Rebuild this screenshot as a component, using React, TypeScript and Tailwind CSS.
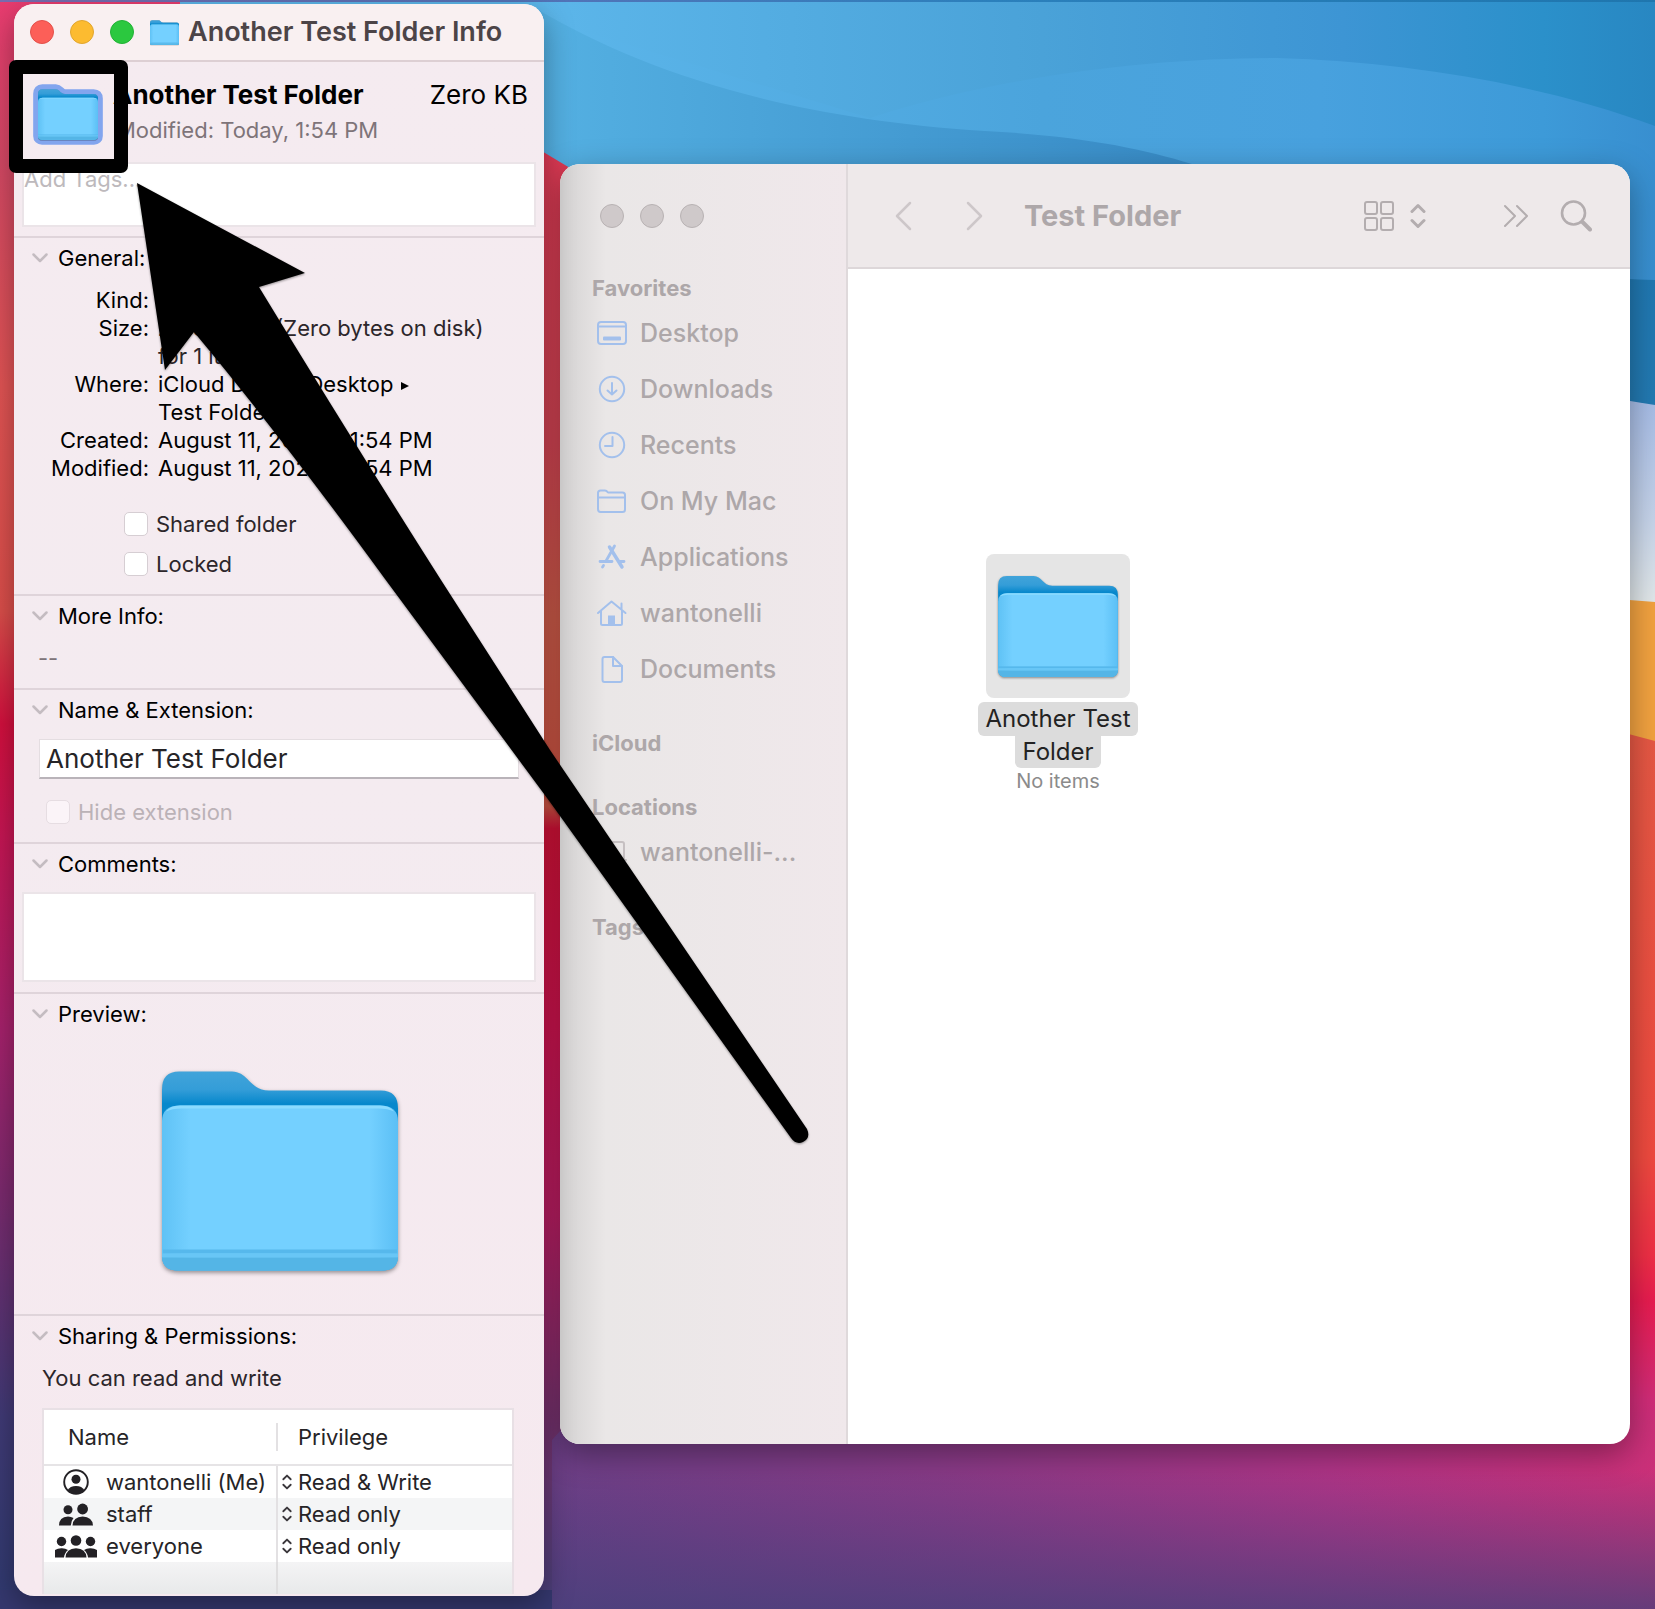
import { useId, type ReactNode } from "react";

function Wallpaper() {
  return (
    <svg
      aria-hidden="true"
      className="absolute inset-0 h-full w-full"
      viewBox="0 0 1655 1609"
      preserveAspectRatio="none"
    >
      <defs>
        <linearGradient id="wp-left" x1="0" y1="0" x2="0" y2="1609" gradientUnits="userSpaceOnUse">
          <stop offset="0" stopColor="#e93c70" />
          <stop offset="0.1" stopColor="#d34864" />
          <stop offset="0.24" stopColor="#e15454" />
          <stop offset="0.38" stopColor="#da4e4a" />
          <stop offset="0.45" stopColor="#d3103e" />
          <stop offset="0.52" stopColor="#c61654" />
          <stop offset="0.64" stopColor="#a6226c" />
          <stop offset="0.74" stopColor="#7c2a6e" />
          <stop offset="0.88" stopColor="#403a76" />
          <stop offset="1" stopColor="#303a70" />
        </linearGradient>
        <linearGradient id="wp-mid" x1="0" y1="150" x2="0" y2="1609" gradientUnits="userSpaceOnUse">
          <stop offset="0" stopColor="#e03a55" />
          <stop offset="0.2" stopColor="#d54554" />
          <stop offset="0.32" stopColor="#d05c4a" />
          <stop offset="0.45" stopColor="#d05444" />
          <stop offset="0.465" stopColor="#d41238" />
          <stop offset="0.6" stopColor="#d01450" />
          <stop offset="0.73" stopColor="#bc1e64" />
          <stop offset="0.86" stopColor="#7c3270" />
          <stop offset="1" stopColor="#48407a" />
        </linearGradient>
        <linearGradient id="wp-bottom" x1="560" y1="1590" x2="1655" y2="1400" gradientUnits="userSpaceOnUse">
          <stop offset="0" stopColor="#6b3f86" />
          <stop offset="0.35" stopColor="#873a86" />
          <stop offset="0.7" stopColor="#ae3486" />
          <stop offset="1" stopColor="#cc3078" />
        </linearGradient>
        <linearGradient id="wp-base" x1="0" y1="1470" x2="0" y2="1609" gradientUnits="userSpaceOnUse">
          <stop offset="0" stopColor="#44407a" stopOpacity="0" />
          <stop offset="1" stopColor="#44407a" stopOpacity="0.75" />
        </linearGradient>
        <linearGradient id="wp-right" x1="0" y1="735" x2="0" y2="1500" gradientUnits="userSpaceOnUse">
          <stop offset="0" stopColor="#e65844" />
          <stop offset="0.55" stopColor="#ef4a3f" />
          <stop offset="0.68" stopColor="#ef2f45" />
          <stop offset="0.74" stopColor="#e81c50" />
          <stop offset="0.87" stopColor="#d02c78" />
          <stop offset="1" stopColor="#bd3380" />
        </linearGradient>
        <linearGradient id="wp-sky" x1="540" y1="0" x2="1655" y2="0" gradientUnits="userSpaceOnUse">
          <stop offset="0" stopColor="#5cb6ea" />
          <stop offset="0.45" stopColor="#4aa2d8" />
          <stop offset="0.72" stopColor="#3d95d4" />
          <stop offset="0.9" stopColor="#2b90ca" />
          <stop offset="1" stopColor="#2887c2" />
        </linearGradient>
        <linearGradient id="wp-wave" x1="540" y1="0" x2="1655" y2="0" gradientUnits="userSpaceOnUse">
          <stop offset="0" stopColor="#5cb6ea" />
          <stop offset="0.45" stopColor="#4ba4dc" />
          <stop offset="0.7" stopColor="#48a1de" />
          <stop offset="0.9" stopColor="#3d9ad8" />
          <stop offset="1" stopColor="#388fd0" />
        </linearGradient>
        <linearGradient id="wp-low" x1="540" y1="0" x2="1190" y2="0" gradientUnits="userSpaceOnUse">
          <stop offset="0" stopColor="#54b0e2" />
          <stop offset="1" stopColor="#388bc6" />
        </linearGradient>
        <linearGradient id="wp-deep" x1="0" y1="265" x2="0" y2="408" gradientUnits="userSpaceOnUse">
          <stop offset="0" stopColor="#2078b2" />
          <stop offset="1" stopColor="#237ab2" />
        </linearGradient>
        <linearGradient id="wp-pale" x1="0" y1="400" x2="0" y2="602" gradientUnits="userSpaceOnUse">
          <stop offset="0" stopColor="#a6bce6" />
          <stop offset="0.6" stopColor="#c6d4ea" />
          <stop offset="1" stopColor="#e2e8ea" />
        </linearGradient>
        <linearGradient id="wp-edge" x1="0" y1="0" x2="1655" y2="0" gradientUnits="userSpaceOnUse">
          <stop offset="0" stopColor="#7a6cb0" />
          <stop offset="0.35" stopColor="#5074b8" />
          <stop offset="0.6" stopColor="#2b80bc" />
          <stop offset="1" stopColor="#1f76ae" />
        </linearGradient>
      </defs>
      <rect width="300" height="1609" fill="url(#wp-left)" />
      <rect x="180" width="1475" height="420" fill="url(#wp-sky)" />
      <path d="M535 16L870 118C1000 76 1150 58 1277 58C1410 62 1545 85 1655 126V420H535Z" fill="url(#wp-wave)" />
      <path d="M535 8C640 70 780 118 985 131C1080 136 1140 148 1192 164V200H535Z" fill="url(#wp-low)" />
      <path d="M1500 250C1560 270 1600 279 1655 280V420H1500Z" fill="url(#wp-deep)" />
      <path d="M300 150H540L570 168L900 300V1609H300Z" fill="url(#wp-mid)" />
      <path d="M1500 388C1560 390 1600 396 1655 405V620H1500Z" fill="url(#wp-pale)" />
      <path d="M1500 590L1655 602V800H1500Z" fill="#f2a240" />
      <path d="M1500 700L1655 741V1560H1500Z" fill="url(#wp-right)" />
      <path d="M570 1420H1655V1609H552V1440Z" fill="url(#wp-bottom)" />
      <path d="M552 1470H1655V1609H552Z" fill="url(#wp-base)" />
      <rect y="1590" width="552" height="19" fill="#35386f" />
      <rect width="1655" height="2" fill="url(#wp-edge)" />
    </svg>
  );
}

const FOLDER_BACK =
  "M0 18Q0 0 17 0H70C86 0 88 19 107 19H219Q236 19 236 37V184Q236 199 220 199H16Q0 199 0 184Z";

function FolderArt({ className, outlined = false }: { className: string; outlined?: boolean }) {
  const id = useId();
  return (
    <svg aria-hidden="true" viewBox="0 0 236 199" className={"overflow-visible " + className}>
      <defs>
        <linearGradient id={id + "b"} x1="0" y1="0" x2="0" y2="40" gradientUnits="userSpaceOnUse">
          <stop offset="0" stopColor="#41a4da" />
          <stop offset="0.45" stopColor="#349dd8" />
          <stop offset="0.8" stopColor="#0788cc" />
        </linearGradient>
        <linearGradient id={id + "f"} x1="0" y1="0" x2="1" y2="0">
          <stop offset="0" stopColor="#5fc2f5" />
          <stop offset="0.12" stopColor="#74d0ff" />
          <stop offset="0.88" stopColor="#74d0ff" />
          <stop offset="1" stopColor="#5bbff5" />
        </linearGradient>
      </defs>
      {outlined && (
        <path d={FOLDER_BACK} fill="none" stroke="#82a5ee" strokeWidth="38" strokeLinejoin="round" />
      )}
      <g className="drop-shadow-[0_2px_2px_rgba(0,0,0,0.4)]">
        <path d={FOLDER_BACK} fill={`url(#${id}b)`} />
        <path d="M0 50Q0 34 18 34H218Q236 34 236 50V184Q236 199 220 199H16Q0 199 0 184Z" fill={`url(#${id}f)`} />
      </g>
      <path d="M4 40Q8 34 18 34H218Q228 34 232 40Q226 37 216 37H20Q10 37 4 40Z" fill="#8adbff" />
      <rect x="1" y="178" width="234" height="4" fill="#56b8ec" />
      <rect x="0" y="182" width="236" height="4" fill="#68c6f6" />
      <path d="M0 186H236Q235 199 220 199H16Q1 199 0 186Z" fill="#54b5e6" />
    </svg>
  );
}

function UpDown({ className }: { className: string }) {
  return (
    <svg
      aria-hidden="true"
      viewBox="0 0 16 26"
      className={className}
      fill="none"
      stroke="currentColor"
      strokeWidth="3"
      strokeLinecap="round"
      strokeLinejoin="round"
    >
      <path d="M2 8.500L8 2.500L14 8.500M2 17.500L8 23.500L14 17.500" />
    </svg>
  );
}

function Section({ title, children }: { title: string; children: ReactNode }) {
  return (
    <section className="border-t-2 border-[#dfd4da]">
      <button type="button" className="flex h-10 w-full items-center pl-[18px] text-left">
        <svg
          aria-hidden="true"
          viewBox="0 0 16 10"
          className="h-[10px] w-4"
          fill="none"
          stroke="#c4bcc1"
          strokeWidth="2.500"
          strokeLinecap="round"
          strokeLinejoin="round"
        >
          <path d="M1.500 1.500L8 8L14.500 1.500" />
        </svg>
        <span className="ml-[10px] text-[22px] leading-7 text-black">{title}</span>
      </button>
      {children}
    </section>
  );
}

function Check({ label, disabled = false, className }: { label: string; disabled?: boolean; className: string }) {
  return (
    <label className={"flex h-10 items-center gap-2 text-[22px] leading-7 " + className}>
      <input
        type="checkbox"
        disabled={disabled}
        className="h-6 w-6 appearance-none rounded-[5px] border border-[#d6ced3] bg-white disabled:border-[#e6dde2] disabled:bg-[#fbf4f8]"
      />
      {label}
    </label>
  );
}

function PathArrow() {
  return (
    <svg aria-hidden="true" viewBox="0 0 8 8" className="ml-2 inline-block h-2 w-2 align-middle">
      <path d="M0 0L8 4L0 8Z" fill="#000" />
    </svg>
  );
}

const details: { term: string; value: ReactNode; second?: string; tone: string }[] = [
  { term: "Kind:", value: "Folder", tone: "text-black" },
  { term: "Size:", value: "Zero bytes (Zero bytes on disk)", second: "for 1 item", tone: "text-[#2c262a]" },
  {
    term: "Where:",
    value: (
      <>
        iCloud Drive
        <PathArrow /> Desktop
        <PathArrow />
      </>
    ),
    second: "Test Folder",
    tone: "text-black",
  },
  { term: "Created:", value: "August 11, 2021 at 1:54 PM", tone: "text-black" },
  { term: "Modified:", value: "August 11, 2021 at 1:54 PM", tone: "text-black" },
];

function PersonCircle() {
  return (
    <svg aria-hidden="true" viewBox="0 0 26 26" className="h-[26px] w-[26px]" fill="#232125">
      <circle cx="13" cy="13" r="11.800" fill="none" stroke="#232125" strokeWidth="1.900" />
      <circle cx="13" cy="10.300" r="4.500" />
      <path d="M4.500 21.300Q7 17 13 17T21.500 21.300Q18 25 13 25T4.500 21.300Z" />
    </svg>
  );
}

function TwoPeople() {
  return (
    <svg aria-hidden="true" viewBox="0 0 34 23" className="h-[23px] w-[34px]" fill="#232125">
      <circle cx="9" cy="6.800" r="4.500" />
      <path d="M0 22.500Q0 14 9 13.500Q12 13.500 14.500 15Q12 18 11.800 22.500Z" />
      <circle cx="23.600" cy="6" r="5.400" />
      <path d="M13.500 22.500Q14 13.800 23.600 13.500Q33.500 13.800 34 22.500Z" />
    </svg>
  );
}

function ThreePeople() {
  return (
    <svg aria-hidden="true" viewBox="0 0 42 23" className="h-[23px] w-[42px]" fill="#232125">
      <circle cx="6.500" cy="6.500" r="4.700" />
      <circle cx="35.500" cy="6.500" r="4.700" />
      <path d="M0 22.500V15Q3 13 7 13.200Q10.500 13.200 13 15Q9.500 18 9 22.500Z" />
      <path d="M42 22.500V15Q39 13 35 13.200Q31.500 13.200 29 15Q32.500 18 33 22.500Z" />
      <circle cx="21" cy="5.500" r="5.300" />
      <path d="M10.500 22.500Q11 13.500 21 13.200Q31 13.500 31.500 22.500Z" />
    </svg>
  );
}

const people: { name: string; privilege: string; icon: ReactNode; row: string }[] = [
  { name: "wantonelli (Me)", privilege: "Read & Write", icon: <PersonCircle />, row: "bg-white" },
  { name: "staff", privilege: "Read only", icon: <TwoPeople />, row: "bg-[#f4f5f6]" },
  { name: "everyone", privilege: "Read only", icon: <ThreePeople />, row: "bg-white" },
];

function InfoWindow() {
  return (
    <main className="relative z-10 w-[530px] shrink-0 overflow-hidden rounded-[20px] bg-linear-to-b from-[#f5ebf0] via-[#f4ebf0] to-[#f6e9ef] shadow-[0_10px_30px_rgba(0,0,0,0.35)]">
      <header className="flex h-[56px] items-center bg-[#f9f0f1] pl-4">
        <button type="button" aria-label="Close" className="h-6 w-6 rounded-full border border-[#e2504a] bg-[#fc5f58]" />
        <button type="button" aria-label="Minimize" className="ml-4 h-6 w-6 rounded-full border border-[#e0a52e] bg-[#fcbb30]" />
        <button type="button" aria-label="Zoom" className="ml-4 h-6 w-6 rounded-full border border-[#22b136] bg-[#2bc83f]" />
        <FolderArt className="ml-4 h-[25px] w-[29px]" />
        <h1 className="ml-[9px] text-[27px] leading-8 font-semibold whitespace-nowrap text-[#4c4447]">
          Another Test Folder Info
        </h1>
      </header>

      <section className="border-t-2 border-[#ddcfd3] px-2 pb-[9px]">
        <div className="flex">
          <button type="button" aria-label="Folder icon" className="mt-[27px] ml-4 h-[51px] w-[60px]">
            <FolderArt className="h-[51px] w-[60px]" outlined />
          </button>
          <div className="mt-[17px] ml-[15px] flex-1">
            <div className="flex justify-between pr-2 text-[26px] leading-8 text-black">
              <h2 className="font-bold">Another Test Folder</h2>
              <span>Zero KB</span>
            </div>
            <p className="mt-[5px] ml-[3px] text-[22px] leading-7 text-[#7e7479]">Modified: Today, 1:54 PM</p>
          </div>
        </div>
        <textarea
          aria-label="Tags"
          placeholder="Add Tags..."
          className="mt-[18px] block h-[65px] w-full resize-none border-2 border-[#ebe4e8] bg-white pt-px text-[22px] leading-7 placeholder:text-[#bdb9bc]"
        />
      </section>

      <Section title="General:">
        <dl className="pt-2 text-[22px] leading-7">
          {details.map((d) => (
            <div key={d.term} className="flex">
              <dt className="w-[135px] text-right text-black">{d.term}</dt>
              <dd className={"ml-[9px] whitespace-nowrap " + d.tone}>
                {d.value}
                {d.second && <span className="block">{d.second}</span>}
              </dd>
            </div>
          ))}
        </dl>
        <div className="mt-[22px] pb-[10px] text-[#2c262a]">
          <Check label="Shared folder" className="ml-[110px]" />
          <Check label="Locked" className="ml-[110px]" />
        </div>
      </Section>

      <Section title="More Info:">
        <p className="mt-2 pb-4 pl-6 text-[22px] leading-7 text-[#7e7479]">--</p>
      </Section>

      <Section title="Name & Extension:">
        <div className="pb-[10px]">
          <input
            type="text"
            aria-label="Name and extension"
            defaultValue="Another Test Folder"
            className="mt-[9px] ml-[25px] block h-10 w-[480px] border border-b-2 border-[#e4dde1] border-b-[#b9b3b9] bg-white pl-[6px] text-[26px] leading-8 text-[#262427]"
          />
          <Check label="Hide extension" disabled className="mt-[13px] ml-8 text-[#bbb2b7]" />
        </div>
      </Section>

      <Section title="Comments:">
        <div className="px-2 pb-[10px]">
          <textarea
            aria-label="Comments"
            className="mt-2 block h-[90px] w-full resize-none border-2 border-[#ebe4e8] bg-white"
          />
        </div>
      </Section>

      <Section title="Preview:">
        <div className="flex justify-center pt-[37px] pb-[43px] pl-[2px]">
          <FolderArt className="h-[200px] w-[236px]" />
        </div>
      </Section>

      <Section title="Sharing & Permissions:">
        <p className="mt-2 ml-7 text-[22px] leading-7 text-[#2c262a]">You can read and write</p>
        <table className="mt-4 ml-7 w-[472px] table-fixed border-separate border-spacing-0 border-x-2 border-t-2 border-[#e8e0e5] text-left text-[22px] leading-7 text-[#262427]">
          <thead className="bg-white">
            <tr className="h-[56px]">
              <th scope="col" className="w-[234px] border-b-2 border-[#e6e4e6] p-0 font-normal">
                <div className="border-r-2 border-[#e3e1e3] pl-6">Name</div>
              </th>
              <th scope="col" className="border-b-2 border-[#e6e4e6] p-0 pl-5 font-normal">
                Privilege
              </th>
            </tr>
          </thead>
          <tbody>
            {people.map((p) => (
              <tr key={p.name} className={"h-8 " + p.row}>
                <td className="border-r-2 border-[#e3e1e3] p-0">
                  <div className="flex items-center">
                    <span className="ml-[9px] flex w-[46px] justify-center">{p.icon}</span>
                    <span className="ml-[7px] whitespace-nowrap">{p.name}</span>
                  </div>
                </td>
                <td className="p-0">
                  <div className="flex items-center pl-1">
                    <UpDown className="h-4 w-[10px] text-[#3a373b]" />
                    <select
                      aria-label={"Privilege for " + p.name}
                      className="ml-[6px] appearance-none bg-transparent"
                      defaultValue={p.privilege}
                    >
                      <option>{p.privilege}</option>
                      <option>Write only</option>
                    </select>
                  </div>
                </td>
              </tr>
            ))}
            <tr className="h-8 bg-linear-to-b from-[#f4f4f5] to-[#e8e9ea]">
              <td className="border-r-2 border-[#dfdedf] p-0" />
              <td className="p-0" />
            </tr>
          </tbody>
        </table>
      </Section>
    </main>
  );
}

function SideIcon({ children }: { children: ReactNode }) {
  return (
    <svg
      aria-hidden="true"
      viewBox="0 0 32 32"
      className="h-8 w-8 shrink-0"
      fill="none"
      stroke="#a3c0ec"
      strokeWidth="2"
      strokeLinecap="round"
      strokeLinejoin="round"
    >
      {children}
    </svg>
  );
}

const favorites: { label: string; art: ReactNode }[] = [
  {
    label: "Desktop",
    art: (
      <>
        <rect x="2" y="5" width="28" height="22" rx="3" />
        <path d="M2 9.500H30" />
        <rect x="7" y="19.500" width="18" height="4" rx="1" fill="#a3c0ec" stroke="none" />
      </>
    ),
  },
  {
    label: "Downloads",
    art: (
      <>
        <circle cx="16" cy="16" r="12.200" />
        <path d="M16 10V21.500M11.500 17.500L16 21.500L20.500 17.500" />
      </>
    ),
  },
  {
    label: "Recents",
    art: (
      <>
        <circle cx="16" cy="16" r="12.200" />
        <path d="M16.500 8V17H9" />
      </>
    ),
  },
  {
    label: "On My Mac",
    art: (
      <path d="M2 24V8Q2 5.500 4.500 5.500H9Q10.500 5.500 12 7.500H26.500Q29 7.500 29 10V24.500Q29 27 26.500 27H4.500Q2 27 2 24ZM2 12.500H29" />
    ),
  },
  {
    label: "Applications",
    art: (
      <>
        <path d="M13.500 6L26 26" strokeWidth="3.500" />
        <path d="M18.500 5L10 20M7.500 24.500L6.500 26" strokeWidth="2.800" />
        <path d="M4 20.500H16M23 20.500H28" strokeWidth="2.800" />
      </>
    ),
  },
  {
    label: "wantonelli",
    art: (
      <>
        <path d="M2 16L15.500 4.500L29.500 16M25.500 12V6.500M5 14V26.500Q5 28 6.500 28H24.500Q26 28 26 26.500V14" />
        <rect x="12" y="18.500" width="7" height="9" fill="#a3c0ec" stroke="none" />
      </>
    ),
  },
  {
    label: "Documents",
    art: (
      <>
        <path d="M6.500 6Q6.500 4 8.500 4H17L26 13V27Q26 29 24 29H8.500Q6.500 29 6.500 27Z" />
        <path d="M17 4V13H26" />
      </>
    ),
  },
];

function SideLink({ label, children }: { label: string; children: ReactNode }) {
  return (
    <a href="#" className="flex h-14 items-center pl-9 text-[25px] leading-8 font-medium text-[#ada7a9]">
      <SideIcon>{children}</SideIcon>
      <span className="ml-3 truncate">{label}</span>
    </a>
  );
}

const sideHeading = "pl-8 text-[22px] leading-7 font-bold text-[#ada7a9]";

function FinderWindow() {
  return (
    <section
      aria-label="Finder"
      className="relative mt-40 mb-[152px] ml-4 flex min-w-0 flex-1 overflow-hidden rounded-[20px] bg-white shadow-[0_10px_32px_rgba(0,0,0,0.35)]"
    >
      <nav className="w-[288px] shrink-0 border-r-2 border-[#dfd9db] bg-linear-to-r from-[#d3d1d1] via-[#eae7e7] via-16% to-[#f0e8eb]">
        <div className="flex h-[104px] items-center gap-4 pl-10">
          <button type="button" aria-label="Close Finder" className="h-6 w-6 rounded-full border border-[#b8b2b3] bg-[#cfc9ca]" />
          <button type="button" aria-label="Minimize Finder" className="h-6 w-6 rounded-full border border-[#b8b2b3] bg-[#cfc9ca]" />
          <button type="button" aria-label="Zoom Finder" className="h-6 w-6 rounded-full border border-[#b8b2b3] bg-[#cfc9ca]" />
        </div>
        <h2 className={"mt-[6px] mb-[3px] " + sideHeading}>Favorites</h2>
        {favorites.map((f) => (
          <SideLink key={f.label} label={f.label}>
            {f.art}
          </SideLink>
        ))}
        <h2 className={"mt-8 " + sideHeading}>iCloud</h2>
        <h2 className={"mt-9 mb-[3px] " + sideHeading}>Locations</h2>
        <SideLink label="wantonelli-...">
          <path d="M6 23V8Q6 6 8 6H26Q28 6 28 8V23M2 24H30" stroke="#c6c0c2" />
        </SideLink>
        <h2 className={"mt-[33px] " + sideHeading}>Tags</h2>
      </nav>

      <div className="min-w-0 flex-1">
        <header className="flex h-[105px] items-center border-b-2 border-[#ddd7d9] bg-[#eee9ea] pr-[38px] pl-[46px] text-[#b3adaf]">
          <button type="button" aria-label="Back">
            <svg viewBox="0 0 18 30" className="h-[30px] w-[18px]" fill="none" stroke="#cdc7c9" strokeWidth="2.500" strokeLinecap="round" strokeLinejoin="round">
              <path d="M16 2L3 15L16 28" />
            </svg>
          </button>
          <button type="button" aria-label="Forward" className="ml-[54px]">
            <svg viewBox="0 0 18 30" className="h-[30px] w-[18px]" fill="none" stroke="#cdc7c9" strokeWidth="2.500" strokeLinecap="round" strokeLinejoin="round">
              <path d="M2 2L15 15L2 28" />
            </svg>
          </button>
          <h1 className="ml-10 text-[29px] leading-8 font-bold whitespace-nowrap text-[#ada7a9]">Test Folder</h1>
          <button type="button" aria-label="View as icons" className="ml-auto flex items-center gap-[15px]">
            <svg viewBox="0 0 32 32" className="h-8 w-8" fill="none" stroke="currentColor" strokeWidth="2">
              <rect x="2" y="2" width="12" height="12" rx="2" />
              <rect x="18" y="2" width="12" height="12" rx="2" />
              <rect x="2" y="18" width="12" height="12" rx="2" />
              <rect x="18" y="18" width="12" height="12" rx="2" />
            </svg>
            <UpDown className="h-[26px] w-4" />
          </button>
          <button type="button" aria-label="More" className="ml-[77px]">
            <svg viewBox="0 0 26 24" className="h-6 w-[26px]" fill="none" stroke="currentColor" strokeWidth="2" strokeLinecap="round" strokeLinejoin="round">
              <path d="M2 2L12 12L2 22M14 2L24 12L14 22" />
            </svg>
          </button>
          <button type="button" aria-label="Search" className="ml-[31px]">
            <svg viewBox="0 0 32 32" className="h-8 w-8" fill="none" stroke="currentColor" strokeLinecap="round">
              <circle cx="13.500" cy="13" r="11.500" strokeWidth="2.600" />
              <path d="M22.500 22L30 29.500" strokeWidth="4" />
            </svg>
          </button>
        </header>
        <button type="button" className="mt-[285px] ml-[130px] flex w-40 flex-col items-center">
          <span className="flex h-36 w-36 items-center justify-center rounded-[8px] bg-[#e5e5e5]">
            <FolderArt className="h-[101px] w-[120px]" />
          </span>
          <span className="mt-1 rounded-[6px] bg-[#dcdcdc] px-[7px] text-[24px] leading-[34px] whitespace-nowrap text-[#232323]">
            Another Test
          </span>
          <span className="rounded-b-[6px] bg-[#dcdcdc] px-[7px] text-[24px] leading-8 text-[#232323]">
            Folder
          </span>
          <span className="text-[20px] leading-[26px] text-[#8b8b8b]">No items</span>
        </button>
      </div>
    </section>
  );
}

function Annotation() {
  return (
    <svg
      aria-hidden="true"
      viewBox="0 0 820 1160"
      className="pointer-events-none absolute top-0 left-0 z-20 h-[1160px] w-[820px]"
    >
      <rect x="16" y="67" width="105" height="99" fill="none" stroke="#000" strokeWidth="14" strokeLinejoin="round" />
      <path
        className="drop-shadow-[0_1px_1px_rgba(0,0,0,0.4)]"
        d="M137 183L305 273L259 287Q352 440 441 580L550 750L807 1129Q811 1138 803 1142Q796 1145 791 1138L550 802L385 579Q280 435 194 332L165 370Z"
        fill="#000"
      />
    </svg>
  );
}

export default function App() {
  return (
    <div className="relative flex min-h-screen overflow-hidden pt-1 pr-[25px] pb-[13px] pl-[14px] font-[Inter,sans-serif]">
      <Wallpaper />
      <InfoWindow />
      <FinderWindow />
      <Annotation />
    </div>
  );
}
